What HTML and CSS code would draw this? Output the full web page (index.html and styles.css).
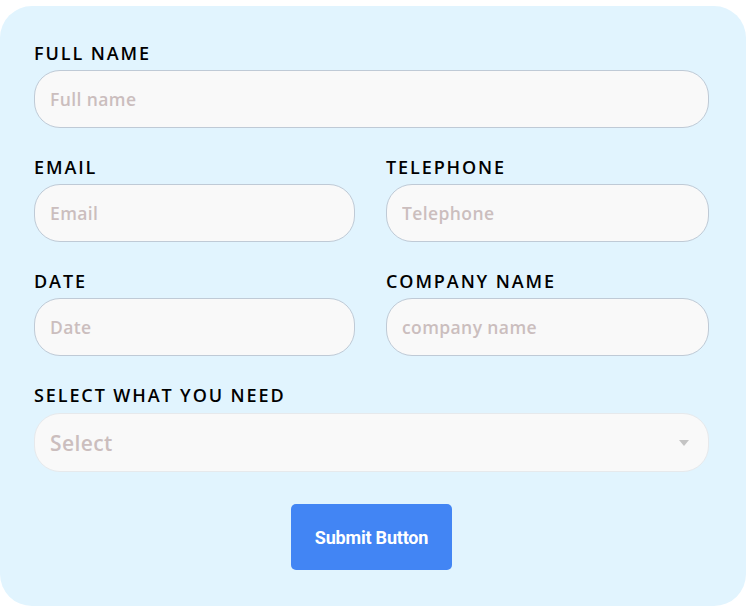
FILE: index.html
```html
<!DOCTYPE html>
<html lang="en">
<head>
<meta charset="utf-8">
<title>Form</title>
<link rel="stylesheet" href="styles.css">
</head>
<body>
<form class="card">
  <div class="grid">
    <div class="field span2">
      <label class="label" for="fullname">FULL NAME</label>
      <input class="input" id="fullname" type="text" placeholder="Full name">
    </div>
    <div class="field">
      <label class="label" for="email">EMAIL</label>
      <input class="input" id="email" type="text" placeholder="Email">
    </div>
    <div class="field">
      <label class="label" for="tel">TELEPHONE</label>
      <input class="input" id="tel" type="text" placeholder="Telephone">
    </div>
    <div class="field">
      <label class="label" for="date">DATE</label>
      <input class="input" id="date" type="text" placeholder="Date">
    </div>
    <div class="field">
      <label class="label" for="company">COMPANY NAME</label>
      <input class="input" id="company" type="text" placeholder="company name">
    </div>
    <div class="field span2">
      <label class="label" for="need">SELECT WHAT YOU NEED</label>
      <div class="select">
        <span class="select-text">Select</span>
        <svg class="caret" width="10" height="6" viewBox="0 0 10 6"><path d="M0 0h10L5 6z" fill="#c4c4c4"/></svg>
      </div>
    </div>
  </div>
  <div class="actions">
    <button class="btn" type="button">Submit Button</button>
  </div>
</form>
</body>
</html>
```
FILE: styles.css
```css
html, body {
  margin: 0;
  padding: 0;
  background: #ffffff;
}
.card {
  box-sizing: border-box;
  width: 746px;
  height: 600px;
  margin-top: 6px;
  background: #e1f4fe;
  border-radius: 32px;
  padding: 37px 37px 0 34px;
}
.grid {
  display: grid;
  grid-template-columns: 321px 323px;
  column-gap: 31px;
  row-gap: 29px;
}
.span2 {
  grid-column: 1 / span 2;
}
.field {
  display: flex;
  flex-direction: column;
}
.label {
  font-family: "Open Sans", sans-serif;
  font-weight: 600;
  font-size: 18px;
  line-height: 20px;
  letter-spacing: 1.9px;
  color: #000;
  margin-bottom: 7px;
}
.input {
  box-sizing: border-box;
  height: 58px;
  width: 100%;
  border: 1px solid #bfcad6;
  border-radius: 26px;
  background: #f9f9f9;
  padding: 0 15px;
  font-family: "Open Sans", sans-serif;
  font-weight: 600;
  font-size: 17.5px;
  letter-spacing: 0.4px;
  color: #333;
  outline: none;
}
.input::placeholder {
  color: #cbbebe;
}
.select {
  box-sizing: border-box;
  height: 59px;
  margin-top: 1px;
  border: 1px solid #e6e9ec;
  border-radius: 26px;
  background: #f9f9f9;
  padding: 0 19px 0 15px;
  display: flex;
  align-items: center;
  justify-content: space-between;
}
.select-text {
  font-family: "Open Sans", sans-serif;
  font-weight: 600;
  font-size: 21px;
  letter-spacing: 0.4px;
  color: #cbbebe;
}
.actions {
  display: flex;
  justify-content: center;
  margin-top: 32px;
}
.btn {
  width: 161px;
  height: 66px;
  border: none;
  border-radius: 5px;
  background: #4285f4;
  color: #fff;
  font-family: Roboto, sans-serif;
  font-weight: 700;
  font-size: 18px;
  letter-spacing: -0.2px;
}
```
